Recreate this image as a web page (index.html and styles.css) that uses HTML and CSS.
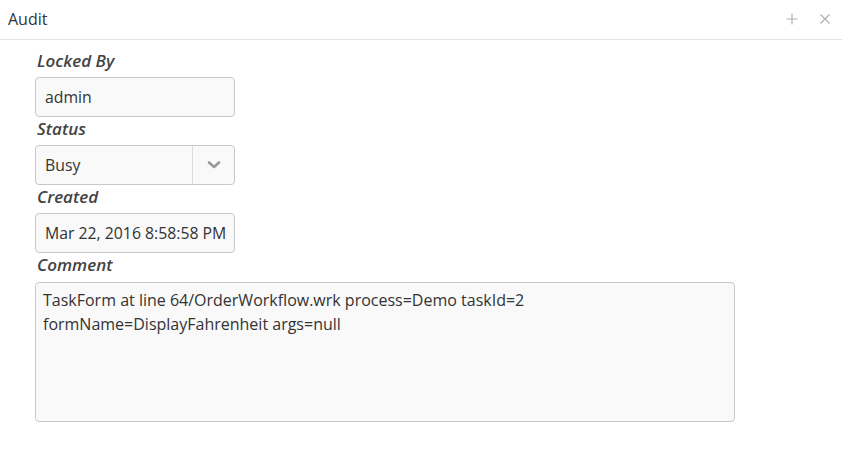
FILE: index.html
```html
<!DOCTYPE html>
<html>
<head>
<meta charset="utf-8">
<link rel="stylesheet" href="styles.css">
</head>
<body>
<div class="dialog">
  <div class="header">
    <span class="title">Audit</span>
    <div class="tools">
      <svg class="tool" width="12" height="12" viewBox="0 0 12 12"><path d="M6 0.5V11.5M0.5 6H11.5" stroke="#b0b0b0" stroke-width="1.2" fill="none"/></svg>
      <svg class="tool" width="12" height="12" viewBox="0 0 12 12"><path d="M1.5 1.5L10.5 10.5M10.5 1.5L1.5 10.5" stroke="#b0b0b0" stroke-width="1.2" fill="none"/></svg>
    </div>
  </div>
  <div class="form">
    <div class="field">
      <div class="label">Locked By</div>
      <div class="input">admin</div>
    </div>
    <div class="field">
      <div class="label">Status</div>
      <div class="input select">
        <span class="sel-text">Busy</span>
        <span class="sel-btn"><svg width="14" height="10" viewBox="0 0 14 10"><path d="M2 2.5L7 7L12 2.5" stroke="#999" stroke-width="2.6" fill="none" stroke-linecap="round" stroke-linejoin="round"/></svg></span>
      </div>
    </div>
    <div class="field">
      <div class="label">Created</div>
      <div class="input">Mar 22, 2016 8:58:58 PM</div>
    </div>
    <div class="field">
      <div class="label">Comment</div>
      <div class="textarea">TaskForm at line 64/OrderWorkflow.wrk process=Demo taskId=2<br>formName=DisplayFahrenheit args=null</div>
    </div>
  </div>
</div>
</body>
</html>
```
FILE: styles.css
```css
html, body { margin: 0; padding: 0; background: #fff; }
body { font-family: "Open Sans", "Noto Sans", sans-serif; color: #333; width: 842px; height: 457px; overflow: hidden; }
.header { height: 39px; border-bottom: 1px solid #e3e3e3; display: flex; align-items: center; justify-content: space-between; padding: 0 11px 0 8px; }
.title { font-size: 16px; color: #333; margin-top: -1px; }
.tools { display: flex; gap: 21px; align-items: center; margin-top: -2px; }
.tool { display: block; }
.form { padding: 9px 0 0 35px; display: flex; flex-direction: column; }
.field { display: flex; flex-direction: column; }
.label { font-size: 17px; font-style: italic; font-weight: 600; color: #444; height: 28px; line-height: 24px; padding-left: 2px; }
.input { box-sizing: border-box; width: 200px; height: 40px; border: 1px solid #c8c8c8; border-radius: 4px; background: #f9f9f9; font-size: 15.8px; line-height: 38px; padding-left: 9px; white-space: nowrap; }
.select { display: flex; padding-left: 0; }
.sel-text { flex: 1; padding-left: 9px; }
.sel-btn { width: 41px; border-left: 1px solid #dcdcdc; display: flex; align-items: center; justify-content: center; }
.textarea { box-sizing: border-box; width: 700px; height: 140px; border: 1px solid #c8c8c8; border-radius: 4px; background: #f9f9f9; font-size: 16px; line-height: 24px; padding: 5px 7px; margin-top: 1px; }
```
